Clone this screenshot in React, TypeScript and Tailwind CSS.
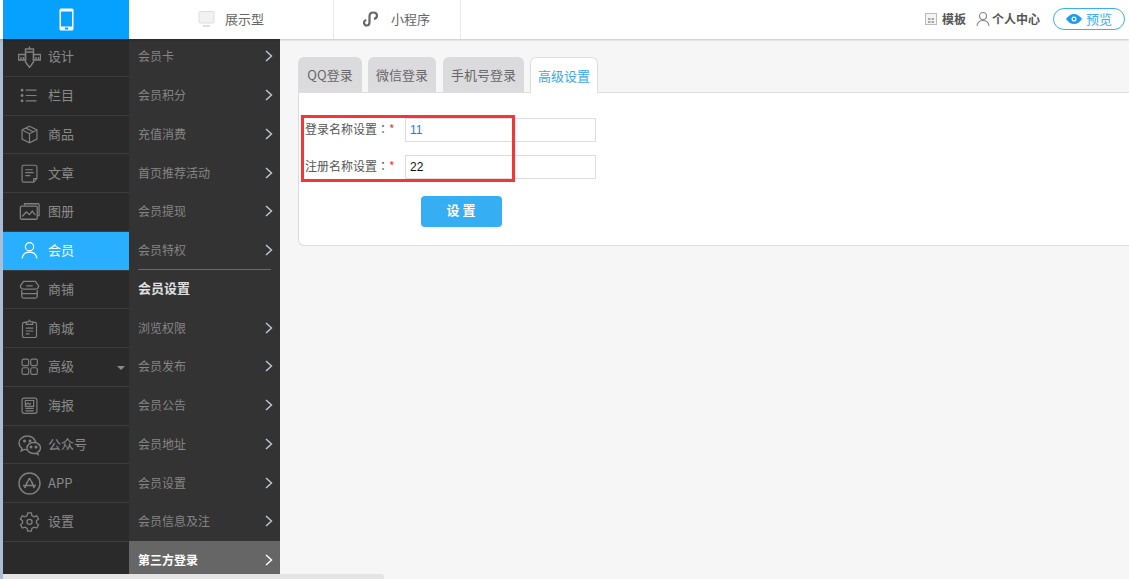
import React from "react";

const stroke = "#808080";

const icons: Record<string, React.ReactNode> = {
  design: (
    <g>
      <path d="M0.500 9.500h7v5.500h-7zM15.500 9.500h7v5.500h-7zM3 12v3M5.500 12v3M18 12v3M20.500 12v3" />
      <path d="M7.500 4h8v13l-4 5.500-4-5.500zM7.500 7h8M11.500 1.500V4" />
    </g>
  ),
  list: (
    <g strokeWidth="1.500">
      <path d="M7 5h13M7 11.500h13M7 18h13" />
      <circle cx="2.500" cy="5" r="1" fill={stroke} />
      <circle cx="2.500" cy="11.500" r="1" fill={stroke} />
      <circle cx="2.500" cy="18" r="1" fill={stroke} />
    </g>
  ),
  box: <path d="M11.500 1.500l9 4.500v11l-9 4.500-9-4.500V6zM2.500 6l9 4.500 9-4.500M11.500 10.500v11M7 3.800l9 4.500" />,
  doc: (
    <g>
      <path d="M4.500 1.500h14a2 2 0 0 1 2 2v14l-4 4.500h-12a2 2 0 0 1-2-2v-16.500a2 2 0 0 1 2-2z" />
      <path d="M6.500 7h9M6.500 10.500h10M6.500 14h6M16.500 22v-4.500h4" />
    </g>
  ),
  album: (
    <g>
      <path d="M6 5V3h15a1 1 0 0 1 1 1v12h-2" />
      <rect x="1.500" y="5.500" width="18.500" height="14.500" rx="1.500" />
      <path d="M3.500 17l4.500-5 3.500 3 3-4 3.500 4.500" />
    </g>
  ),
  user: (
    <g>
      <circle cx="11.500" cy="7" r="5" />
      <path d="M2.500 21c1-5 4.500-7.500 9-7.500s8 2.500 9 7.500" />
    </g>
  ),
  shop: (
    <g>
      <path d="M5 2.500h13l3.500 5c0 2-1.500 3.500-3.500 3.500H5C3 11 1.500 9.500 1.500 7.500z" />
      <path d="M3 12v7a2 2 0 0 0 2 2h13a2 2 0 0 0 2-2v-7M3 16h17M8 7.500h7" />
    </g>
  ),
  mall: (
    <g>
      <path d="M7.500 4H5a2 2 0 0 0-2 2v14.500a2 2 0 0 0 2 2h13a2 2 0 0 0 2-2V6a2 2 0 0 0-2-2h-2.500" />
      <path d="M7.500 6.500v-3H10L11.500 1.500 13 3.500h2.500v3zM7 11h9M7 14.500h9M7 18h4.500" />
    </g>
  ),
  grid: (
    <g>
      <rect x="2.500" y="2.500" width="8" height="8" rx="2" />
      <rect x="13" y="2.500" width="8" height="8" rx="2" />
      <rect x="2.500" y="13" width="8" height="8" rx="2" />
      <rect x="13" y="13" width="8" height="8" rx="2" />
    </g>
  ),
  poster: (
    <g>
      <rect x="2.500" y="2.500" width="18" height="18.500" rx="2.500" />
      <path d="M6.500 5.500h10v7h-10zM6.500 11l3-2.500 2 1.500 2-1M6.500 15h10M6.500 18h10" />
    </g>
  ),
  wechat: (
    <g>
      <path d="M9.500 3C5 3 1 6 1 10c0 2.200 1.200 4 3 5.300L3.300 18l3-1.600c1 .3 2 .4 3 .4" />
      <path d="M18 9.500C16.500 5.500 13 3 9.500 3" />
      <path d="M15.500 9.500c-3.600 0-6.500 2.500-6.500 5.500s2.900 5.500 6.500 5.500c.8 0 1.500-.1 2.300-.3l2.200 1.300-.5-2.200c1.800-1 3-2.600 3-4.300 0-3-2.900-5.500-6.500-5.500z" />
      <circle cx="6.500" cy="8" r=".8" fill={stroke} />
      <circle cx="12" cy="8" r=".8" fill={stroke} />
      <circle cx="13" cy="14" r=".8" fill={stroke} />
      <circle cx="18" cy="14" r=".8" fill={stroke} />
    </g>
  ),
  app: (
    <g>
      <circle cx="11.500" cy="11.500" r="10.500" />
      <path d="M11.500 6L6.500 16M11.500 6l5 10M5 13.500h13M9 10l-2 6M14 10l2 6" />
    </g>
  ),
  gear: (
    <g>
      <path d="M9.500 2h4l.6 3 2.400 1.300 2.900-1 2 3.500-2.300 2v2.400l2.300 2-2 3.500-2.900-1-2.400 1.300-.6 3h-4l-.6-3-2.400-1.300-2.900 1-2-3.500 2.300-2v-2.400l-2.300-2 2-3.500 2.900 1 2.400-1.300z" />
      <circle cx="11.500" cy="11.900" r="2.800" />
    </g>
  ),
};

const iconSize: Record<string, number> = { design: 23, wechat: 23, app: 23, gear: 21, album: 21, shop: 21 };

const mainMenu = [
  { name: "设计", icon: "design" },
  { name: "栏目", icon: "list" },
  { name: "商品", icon: "box" },
  { name: "文章", icon: "doc" },
  { name: "图册", icon: "album" },
  { name: "会员", icon: "user", active: true },
  { name: "商铺", icon: "shop" },
  { name: "商城", icon: "mall" },
  { name: "高级", icon: "grid", caret: true },
  { name: "海报", icon: "poster" },
  { name: "公众号", icon: "wechat" },
  { name: "APP", icon: "app" },
  { name: "设置", icon: "gear" },
];

const subMenu = [
  { name: "会员卡" },
  { name: "会员积分" },
  { name: "充值消费" },
  { name: "首页推荐活动" },
  { name: "会员提现" },
  { name: "会员特权", short: true },
  { name: "会员设置", head: true },
  { name: "浏览权限" },
  { name: "会员发布" },
  { name: "会员公告" },
  { name: "会员地址" },
  { name: "会员设置" },
  { name: "会员信息及注" },
  { name: "第三方登录", current: true },
];

const Chevron = ({ light }: { light?: boolean }) => (
  <svg width="8" height="12" viewBox="0 0 8 12" fill="none" stroke={light ? "#ffffff" : "#c3c9d6"} strokeWidth="1.400">
    <path d="M1 1l5.500 5L1 11" />
  </svg>
);

const Sidebar = () => (
  <div className="-mt-[1px] w-[126px] shrink-0 bg-[#2a2a2a]">
    {mainMenu.map((item) => (
      <div
        key={item.name}
        className={`relative flex h-[38.75px] items-center border-b border-[#3d3d3d] pl-[15px] text-[13px] ${
          item.active ? "bg-[#29afff] text-white" : "text-[#8a8a8a]"
        }`}
      >
        <div className="flex w-[23px] shrink-0 justify-center">
          <svg
            width={iconSize[item.icon] || 19}
            height={iconSize[item.icon] || 19}
            viewBox="0 0 23 23"
            fill="none"
            stroke={item.active ? "#ffffff" : stroke}
            strokeWidth="1.400"
          >
            {icons[item.icon]}
          </svg>
        </div>
        <span className="ml-[7px] pb-[2px] leading-none">{item.name}</span>
        {item.caret && (
          <span className="absolute right-[4px] top-[18px] border-x-[4px] border-t-[4px] border-x-transparent border-t-[#8a8a8a]" />
        )}
      </div>
    ))}
  </div>
);

const SubMenu = () => (
  <div className="-mt-[2px] w-[151px] shrink-0 bg-[#333333]">
    {subMenu.map((item) =>
      item.head ? (
        <div
          key={item.name + "head"}
          className="mx-[9px] flex h-[39.75px] items-center border-t border-[#6a6a6a] pb-[2px] text-[13px] font-bold text-[#e0e0e0]"
        >
          {item.name}
        </div>
      ) : (
        <div
          key={item.name}
          className={`flex items-center justify-between pl-[9px] pr-[7px] text-[12px] ${
            item.short ? "h-[37.75px]" : "h-[38.75px]"
          } ${item.current ? "bg-[#666666] font-bold text-white" : "text-[#858585]"}`}
        >
          <span>{item.name}</span>
          <Chevron light={item.current} />
        </div>
      ),
    )}
  </div>
);

const Field = ({ label, value, blue }: { label: string; value: string; blue?: boolean }) => (
  <div className="flex h-[24px] items-center">
    <label className="w-[101px] shrink-0 pb-[2px] pl-[1px] text-[12px] text-[#555555]">
      {label}
      <span className="font-['Noto_Sans_CJK_TC',sans-serif]">：</span>
      <span className="text-[#ff3333]">*</span>
    </label>
    <input
      readOnly
      value={value}
      className={`h-[24px] w-[191px] border border-[#dddddd] px-[4px] font-['Liberation_Sans',sans-serif] text-[12px] ${
        blue ? "text-[#1a7fd0]" : "text-[#111111]"
      }`}
    />
  </div>
);

export default function App() {
  return (
    <div className="relative h-[579px] w-[1129px] overflow-hidden bg-[#f6f6f6] font-['Noto_Sans_CJK_SC',sans-serif]">
      <div className="relative z-10 flex h-[39px] bg-white shadow-[0_1px_2px_rgba(0,0,0,0.2)]">
        <div className="w-[3px] shrink-0 bg-white" />
        <div className="flex w-[126px] shrink-0 items-center justify-center bg-[#06a0ff]">
          <svg width="15" height="23" viewBox="0 0 15 23">
            <rect x="0.500" y="0.500" width="14" height="22" rx="1.500" fill="#ffffff" />
            <rect x="2" y="3.500" width="11" height="15" fill="#06a0ff" />
            <rect x="6" y="19.500" width="3" height="2" fill="#06a0ff" />
          </svg>
        </div>
        <div className="flex w-[205px] shrink-0 items-center border-r border-[#e8e8e8] pb-[2px] pl-[69px] text-[13px] text-[#666666]">
          <svg width="18" height="18" viewBox="0 0 18 18" fill="none" className="mr-[9px]">
            <rect x="1" y="1.500" width="15" height="11.500" rx="1" fill="#f2f2f2" stroke="#dddddd" />
            <path d="M5 16h7" stroke="#e0e0e0" strokeWidth="2" />
          </svg>
          展示型
        </div>
        <div className="flex w-[127px] shrink-0 items-center border-r border-[#e8e8e8] pb-[2px] pl-[29px] text-[13px] text-[#666666]">
          <svg width="16" height="16" viewBox="0 0 16 16" fill="none" stroke="#666666" strokeWidth="2.200" className="mr-[12px]">
            <path d="M6.500 5.500v6c0 1.800-1.300 3-2.800 3S1 13.200 1 11.700c0-1.400 1-2.400 2.300-2.700M6.500 5.500c0-2.200 1.400-4 3.800-4 2.300 0 3.700 1.500 3.700 3.200 0 1.700-1.300 2.800-3 3.200" />
          </svg>
          小程序
        </div>
        <div className="flex flex-1 items-center justify-end pb-[2px] pr-[4px] text-[12px] text-[#555555]">
          <svg width="14" height="14" viewBox="0 0 14 14" className="mr-[4px]">
            <rect x="1.500" y="1.500" width="11" height="11" fill="#f4f4f4" stroke="#bbbbbb" />
            <path d="M4 6h2.500v2H4zM7.500 6H10v2H7.500zM4 9h2.500v2H4zM7.500 9H10v2H7.500z" fill="#aaaaaa" />
          </svg>
          <span className="mr-[10px] font-bold">模板</span>
          <svg width="14" height="15" viewBox="0 0 14 15" fill="none" stroke="#888888" strokeWidth="1.100" className="mr-[2px]">
            <circle cx="7" cy="5" r="3.500" />
            <path d="M1 15c.5-3.500 3-5.500 6-5.500s5.500 2 6 5.500" />
          </svg>
          <span className="mr-[13px] font-bold">个人中心</span>
          <div className="flex h-[22px] w-[72px] items-center justify-center rounded-full border border-[#39aef5] text-[13px] text-[#39aef5]">
            <svg width="16" height="10" viewBox="0 0 16 10" className="mr-[4px]">
              <path d="M0 5c2-3 5-5 8-5s6 2 8 5c-2 3-5 5-8 5S2 8 0 5z" fill="#1d9bf0" />
              <circle cx="8" cy="5" r="2.500" fill="#ffffff" />
              <circle cx="8" cy="5" r="1.300" fill="#1d9bf0" />
            </svg>
            预览
          </div>
        </div>
      </div>

      <div className="flex h-[540px]">
        <div className="w-[3px] shrink-0 bg-[#a9bdd6]" />
        <Sidebar />
        <SubMenu />
        <div className="min-w-0 flex-1 pl-[18px] pt-[18px]">
          <div className="flex h-[35px] items-start text-[13px] text-[#666666]">
            <div className="flex h-[35px] w-[64px] items-center justify-center rounded-t-[6px] bg-[#dbdbdd]">QQ登录</div>
            <div className="ml-[6px] flex h-[35px] w-[68px] items-center justify-center rounded-t-[6px] bg-[#dbdbdd]">微信登录</div>
            <div className="ml-[7px] flex h-[35px] w-[81px] items-center justify-center rounded-t-[6px] bg-[#dbdbdd]">手机号登录</div>
            <div className="relative z-10 ml-[6px] flex h-[36px] w-[68px] items-center justify-center rounded-t-[6px] border border-b-0 border-[#dddddd] bg-white text-[#39a9ee]">
              高级设置
            </div>
          </div>
          <div className="h-[154px] rounded-bl-[6px] border border-r-0 border-[#dddddd] bg-white pl-[5px] pt-[25px]">
            <div className="relative flex flex-col gap-[13px]">
              <Field label="登录名称设置" value="11" blue />
              <Field label="注册名称设置" value="22" />
              <div className="pointer-events-none absolute left-[-3px] top-[-3px] h-[67px] w-[214px] border-[3px] border-[#f53636]" />
            </div>
            <button className="ml-[117px] mt-[17px] h-[31px] w-[81px] rounded-[4px] bg-[#35aef4] pb-[3px] pl-[2px] text-[13px] font-bold tracking-[3px] text-white">
              设置
            </button>
          </div>
        </div>
      </div>
      <div className="absolute bottom-0 left-[3px] h-[5px] w-[381px] rounded-tr-[3px] bg-[#e4e4e4]" />
    </div>
  );
}
